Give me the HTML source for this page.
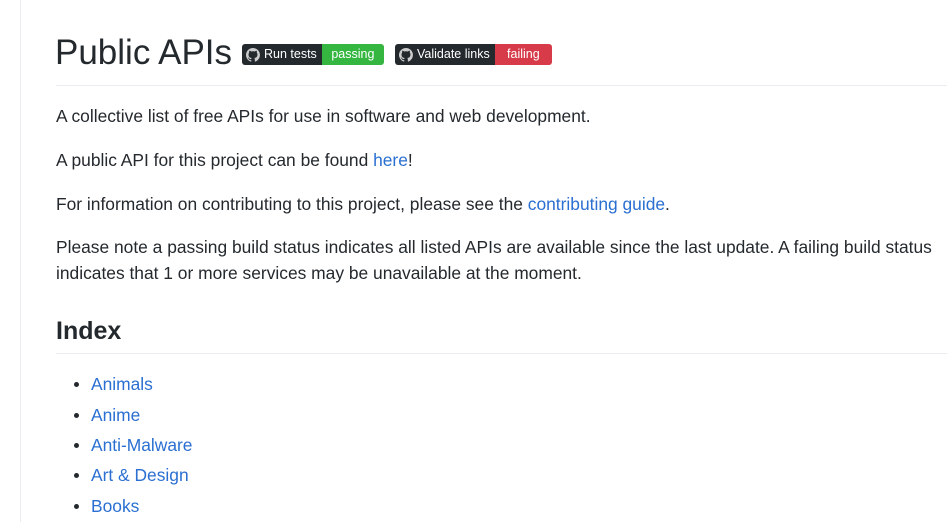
<!DOCTYPE html>
<html><head><meta charset="utf-8"><style>
body{margin:0;width:947px;height:522px;overflow:hidden;background:#fff;font-family:"Liberation Sans",sans-serif;color:#24292e;position:relative}
.bl{position:absolute;left:20px;top:0;width:1px;height:522px;background:#eaecef}
.a{position:absolute;white-space:nowrap}
p.a{margin:0;font-size:17.4px;line-height:26px;left:56px}
a{color:#2a6fd1;text-decoration:none}
.hr{position:absolute;left:56px;right:0;height:1px;background:#eaecef}
.badge{position:absolute;top:44px;height:21px;display:flex;border-radius:3px;overflow:hidden;font-size:12.5px;line-height:21px;color:#fff}
.badge .l{background:#24292e;padding:0 5px 0 4px;display:flex;align-items:center;gap:4px}
.badge .r{padding:0 4px;text-align:center}
li{position:absolute;left:91px;font-size:17.4px;list-style:none}
li:before{content:"";position:absolute;left:-17px;top:8px;width:5px;height:5px;border-radius:50%;background:#24292e}
</style></head><body>
<div class="bl"></div>
<div class="a" style="left:55px;top:31px;font-size:35px;line-height:44px;font-weight:500">Public APIs</div>
<div class="badge" style="left:242px;width:142px"><div class="l"><svg width="14" height="14" viewBox="0 0 16 16"><path fill="#ccc" d="M8 0a8 8 0 0 0-2.5 15.6c.4 0 .5-.2.5-.4v-1.5c-2.2.5-2.7-1-2.7-1-.4-.9-.9-1.2-.9-1.2-.7-.5.1-.5.1-.5.8.1 1.2.8 1.2.8.7 1.3 1.9.9 2.3.7.1-.5.3-.9.5-1.1-1.8-.2-3.6-.9-3.6-4 0-.9.3-1.6.8-2.1-.1-.2-.4-1 .1-2.1 0 0 .7-.2 2.2.8a7.4 7.4 0 0 1 4 0c1.5-1 2.2-.8 2.2-.8.4 1.1.2 1.9.1 2.1.5.6.8 1.3.8 2.1 0 3.1-1.9 3.8-3.6 4 .3.3.6.8.6 1.5v2.2c0 .2.1.5.6.4A8 8 0 0 0 8 0z"/></svg>Run tests</div><div class="r" style="background:#34b640;flex:1">passing</div></div>
<div class="badge" style="left:395px;width:157px"><div class="l"><svg width="14" height="14" viewBox="0 0 16 16"><path fill="#ccc" d="M8 0a8 8 0 0 0-2.5 15.6c.4 0 .5-.2.5-.4v-1.5c-2.2.5-2.7-1-2.7-1-.4-.9-.9-1.2-.9-1.2-.7-.5.1-.5.1-.5.8.1 1.2.8 1.2.8.7 1.3 1.9.9 2.3.7.1-.5.3-.9.5-1.1-1.8-.2-3.6-.9-3.6-4 0-.9.3-1.6.8-2.1-.1-.2-.4-1 .1-2.1 0 0 .7-.2 2.2.8a7.4 7.4 0 0 1 4 0c1.5-1 2.2-.8 2.2-.8.4 1.1.2 1.9.1 2.1.5.6.8 1.3.8 2.1 0 3.1-1.9 3.8-3.6 4 .3.3.6.8.6 1.5v2.2c0 .2.1.5.6.4A8 8 0 0 0 8 0z"/></svg>Validate links</div><div class="r" style="background:#d73a49;flex:1">failing</div></div>
<div class="hr" style="top:85px"></div>
<p class="a" style="top:103px">A collective list of free APIs for use in software and web development.</p>
<p class="a" style="top:147px">A public API for this project can be found <a>here</a>!</p>
<p class="a" style="top:191px">For information on contributing to this project, please see the <a>contributing guide</a>.</p>
<p class="a" style="top:234px">Please note a passing build status indicates all listed APIs are available since the last update. A failing build status<br>indicates that 1 or more services may be unavailable at the moment.</p>
<div class="a" style="left:56px;top:315px;font-size:25px;line-height:32px;font-weight:bold">Index</div>
<div class="hr" style="top:353px"></div>
<ul style="margin:0;padding:0">
<li style="top:374px"><a>Animals</a></li>
<li style="top:405px"><a>Anime</a></li>
<li style="top:435px"><a>Anti-Malware</a></li>
<li style="top:465px"><a>Art &amp; Design</a></li>
<li style="top:496px"><a>Books</a></li>
</ul>
</body></html>
